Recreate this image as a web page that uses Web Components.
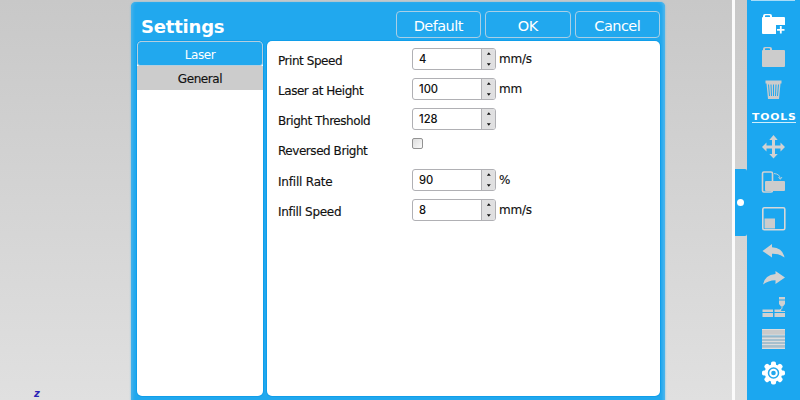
<!DOCTYPE html>
<html lang="en"><head><meta charset="utf-8"><title>Settings</title>
<style>html,body{margin:0;width:800px;height:400px;overflow:hidden;font-family:"DejaVu Sans",sans-serif}</style></head>
<body><laser-app></laser-app>
<script>
const define=(name,html,init)=>customElements.define(name,class extends HTMLElement{
  constructor(){super();this.attachShadow({mode:'open'}).innerHTML=html;}
  connectedCallback(){if(init)init(this,this.shadowRoot);}
});

define('action-button',`<style>
:host{display:flex;box-sizing:border-box;width:85.500px;height:27px;border:1px solid #a9cfe6;border-radius:4px;color:#fff;font-size:14.500px;letter-spacing:-.55px;align-items:center;justify-content:center;padding-top:2px}
</style><slot></slot>`);

define('side-tab',`<style>
:host{display:flex;box-sizing:border-box;height:24px;align-items:center;justify-content:center;font-size:12px;letter-spacing:-.4px;color:#111;background:#ccc;padding-top:1px;-webkit-text-stroke:.15px #111}
:host([active]){height:25px;background:#21a8ee;color:#fff;border:1px solid #b4cede;border-radius:4px 4px 3px 3px;padding-top:2px;-webkit-text-stroke:0}
</style><slot></slot>`);

define('number-field',`<style>
:host{display:flex;box-sizing:border-box;width:84px;height:22px;border:1px solid #b0b0b4;border-radius:3px;background:#fff;overflow:hidden;font:500 11.2px/21px Inter,sans-serif;color:#111}
.v{flex:1;padding-left:6px}
.s{width:13px;border-left:1px solid #b0b0b4;background:#e0e0e1}
svg{display:block}
</style><div class="v"><slot></slot></div><div class="s"><svg width="13" height="20"><path d="M4.800 5.800 6.800 3.200 8.800 5.800zM4.800 14.200 6.800 16.800 8.800 14.200z" fill="#151515"/></svg></div>`);

define('check-field',`<style>
:host{display:block;box-sizing:border-box;width:11px;height:11px;border:1px solid #929292;border-radius:2px;background:linear-gradient(135deg,#ddd,#fafafa)}
</style>`);

define('setting-row',`<style>
:host{display:flex;height:30.15px;color:#111}
.l{width:134px;padding-top:6px;font-size:12px;line-height:15px;white-space:nowrap;-webkit-text-stroke:.15px #111}
.u{padding:4px 0 0 3px;font-size:12px;line-height:15px;letter-spacing:-.2px;-webkit-text-stroke:.15px #111}
</style><div class="l"></div><slot></slot><div class="u"></div>`,(e,r)=>{
  const l=r.querySelector('.l');l.textContent=e.getAttribute('label');
  l.style.letterSpacing=e.getAttribute('spacing')||'-.45px';
  r.querySelector('.u').textContent=e.getAttribute('unit')||'';
});

define('settings-dialog',`<style>
:host{display:flex;flex-direction:column;box-sizing:border-box;width:534px;height:404px;padding:9px 5px 10px 6px;background:#21a8ee;border-radius:5px 5px 0 0;box-shadow:0 0 2px #68bde8,inset 3px 0 3px -1px #47b2e9,inset -3px 0 3px -1px #51b7ed}
header{display:flex;height:30px;gap:4px;align-items:flex-start}
h1{flex:1;margin:4px 0 0 4px;color:#fff;font-size:18px;line-height:24px;letter-spacing:-.2px}
main{flex:1;display:grid;grid-template-columns:126px 393px;gap:4px;min-height:0}
nav,section{background:#fff;border-radius:5px;box-shadow:0 0 0 1px #109eea}
nav{overflow:hidden}
section{box-sizing:border-box;padding:7px 11px}
</style><header><h1>Settings</h1><action-button>Default</action-button><action-button>OK</action-button><action-button>Cancel</action-button></header>
<main><nav><side-tab active>Laser</side-tab><side-tab>General</side-tab></nav><section>
<setting-row label="Print Speed" unit="mm/s"><number-field>4</number-field></setting-row>
<setting-row label="Laser at Height" unit="mm"><number-field>100</number-field></setting-row>
<setting-row label="Bright Threshold"><number-field>128</number-field></setting-row>
<setting-row label="Reversed Bright"><check-field></check-field></setting-row>
<setting-row label="Infill Rate" spacing="-.2px" unit="%"><number-field>90</number-field></setting-row>
<setting-row label="Infill Speed" spacing="-.3px" unit="mm/s"><number-field>8</number-field></setting-row>
</section></main>`);

const icons={
add:`<path fill="#fff" fill-rule="evenodd" d="M1 4q0-1 1-1V2q0-2 2-2h5q2 0 2 2v1h12q1 0 1 1v7h-9v9H2q-1 0-1-1zM4 3h5V2q0-.7-.7-.7H4.700Q4 1.300 4 2z"/><path stroke="#fff" stroke-width="1.800" d="M19.800 12v7.500M16 15.800h7.500"/>`,
folder:`<path fill="#ccc" fill-rule="evenodd" d="M1 4q0-1 1-1V2q0-2 2-2h5q2 0 2 2v1h12q1 0 1 1v15q0 1-1 1H2q-1 0-1-1zM4 3h5V2q0-.7-.7-.7H4.700Q4 1.300 4 2z"/>`,
trash:`<path fill="#ccc" d="M4.500 .5h16v3h-1L18 19H7L5.500 3.500h-1z"/><path stroke="#21a8ee" stroke-width="1" fill="none" d="M7.500 4.500 8.500 16M10 4.500l.5 11.500M12.500 4.500V16M15 4.500 14.500 16M17.500 4.500 16.500 16"/>`,
move:`<path fill="#d2d2d2" d="M12.500 0l4.200 5H14v5.500h5.500v-3L24 12l-4.500 4.500v-3H14V19h2.700l-4.200 4.500L8.300 19H11v-5.500H5.500v3L1 12l4.500-4.500v3H11V5H8.300z"/>`,
rotate:`<rect x="1.500" y="1" width="10" height="20" rx="1.500" fill="none" stroke="#d2d2d2" stroke-width="1.600"/><rect x="4" y="10" width="20" height="10" rx="1" fill="#ccc"/><path d="M13 2.500q6 .5 6.300 5.500M17.500 6l1.800 2.300L21 6" fill="none" stroke="#b4cdda"/>`,
scale:`<rect x="1.800" y=".8" width="22" height="22" rx="1.500" fill="none" stroke="#d8d8d8" stroke-width="1.600"/><path fill="#ccc" d="M3.500 11.500h10.500v10H3.500z"/>`,
undo:`<path fill="#d2d2d2" d="M1.500 7 11 0v3.200Q22 4 23.500 13.500 18.500 9.500 11 9.800V13.500z"/>`,
redo:`<path fill="#d2d2d2" d="M24 6.500 14.500 0v3Q3.500 4 2 13.500 7 9.500 14.500 9.300V13z"/>`,
print:`<path fill="#d0d0d0" d="M18 0h6v2.500h-6zM18 3.500h6V7l-2 2.500h-2L18 7zM1.500 12.500H12V15H1.500zM1.500 16H12v4H1.500zM13.500 12.500h6l1 1.500h3.500v1H13.500zM13.500 16H24v4H13.500z"/><path d="M21 9.500v2l-2 1.500" stroke="#d0d0d0" fill="none"/>`,
layers:`<path fill="#cacaca" d="M1 0h23v6.500H1z"/><path fill="#b9c7cf" d="M1 7h23v13H1z"/><path stroke="#ddd" d="M1 .5h23M1 6h23M1 9.500h23M1 12.500h23M1 15.500h23M1 19.500h23"/><path stroke="#94b8cc" d="M1 7.500h23M1 11h23M1 14h23M1 17h23"/>`,
gear:`<g fill="#fff" transform="translate(.5 0)"><circle cx="12" cy="12" r="8.800"/><g id="t"></g></g><circle cx="12.500" cy="12" r="5" fill="none" stroke="#21a8ee" stroke-width="1.500"/><circle cx="12.500" cy="12" r="2.300" fill="#21a8ee"/>`
};
define('tool-icon',`<style>:host{display:block;width:24px}svg{display:block;overflow:visible}</style><svg width="24"></svg>`,(e,r)=>{
  const s=r.querySelector('svg');s.setAttribute('height',e.getAttribute('h'));
  s.innerHTML=icons[e.getAttribute('name')];
  const t=s.querySelector('#t');
  if(t)t.innerHTML=[0,45,90,135,180,225,270,315].map(a=>`<rect x="9.500" y=".5" width="5" height="5" rx="1.800" transform="rotate(${a} 12 12)"/>`).join('');
});

define('tool-bar',`<style>
:host{display:flex;flex-direction:column;align-items:center;box-sizing:border-box;width:53.500px;height:400px;background:#1ba7f0}
.top{width:44px;height:1px;background:#a7dcf8}
.title{box-sizing:border-box;width:44px;height:12px;margin-left:1px;border-bottom:1px solid #cdeefc;color:#fff;font:bold 9.500px/11px "DejaVu Sans",sans-serif;white-space:nowrap}
.title span{display:block;width:38px;transform:scaleX(1.140);transform-origin:0 0;letter-spacing:.7px}
:host>*,.top,.title,tool-icon{flex:none}
</style><div class="top"></div>
<tool-icon name="add" h="20" style="margin-top:13px"></tool-icon>
<tool-icon name="folder" h="20" style="margin-top:13px"></tool-icon>
<tool-icon name="trash" h="20" style="margin-top:13px"></tool-icon>
<div class="title" style="margin-top:11px"><span>TOOLS</span></div>
<tool-icon name="move" h="24" style="margin-top:12px"></tool-icon>
<tool-icon name="rotate" h="22" style="margin-top:12px"></tool-icon>
<tool-icon name="scale" h="24" style="margin-top:14px"></tool-icon>
<tool-icon name="undo" h="14" style="margin-top:13px"></tool-icon>
<tool-icon name="redo" h="14" style="margin-top:13px"></tool-icon>
<tool-icon name="print" h="20" style="margin-top:12px"></tool-icon>
<tool-icon name="layers" h="20" style="margin-top:12px"></tool-icon>
<tool-icon name="gear" h="24" style="margin-top:12px"></tool-icon>`);

define('drag-rail',`<style>
:host{display:flex;align-items:flex-start;box-sizing:border-box;width:14.500px;height:400px;border-left:3px solid #fbfbfb;padding-top:169px;background:linear-gradient(#c8c8c8,#dedede)}
i{display:flex;align-items:center;justify-content:center;width:100%;height:67px;background:#1ba7f0;border-radius:0 2px 2px 0}
b{width:7px;height:7px;border-radius:50%;background:#fff}
</style><i><b></b></i>`);

define('laser-app',`<style>
:host{display:flex;position:relative;width:800px;height:400px;overflow:hidden;background:linear-gradient(#c8c8c8,#e0e0e0)}
.space{flex:1}
settings-dialog{position:absolute;left:131px;top:2px}
.z{position:absolute;left:34px;top:388px;color:#2a22b5;font:italic bold 10px/12px "DejaVu Sans",sans-serif}
</style><div class="space"></div><drag-rail></drag-rail><tool-bar></tool-bar><span class="z">z</span><settings-dialog></settings-dialog>`);
</script></body></html>
